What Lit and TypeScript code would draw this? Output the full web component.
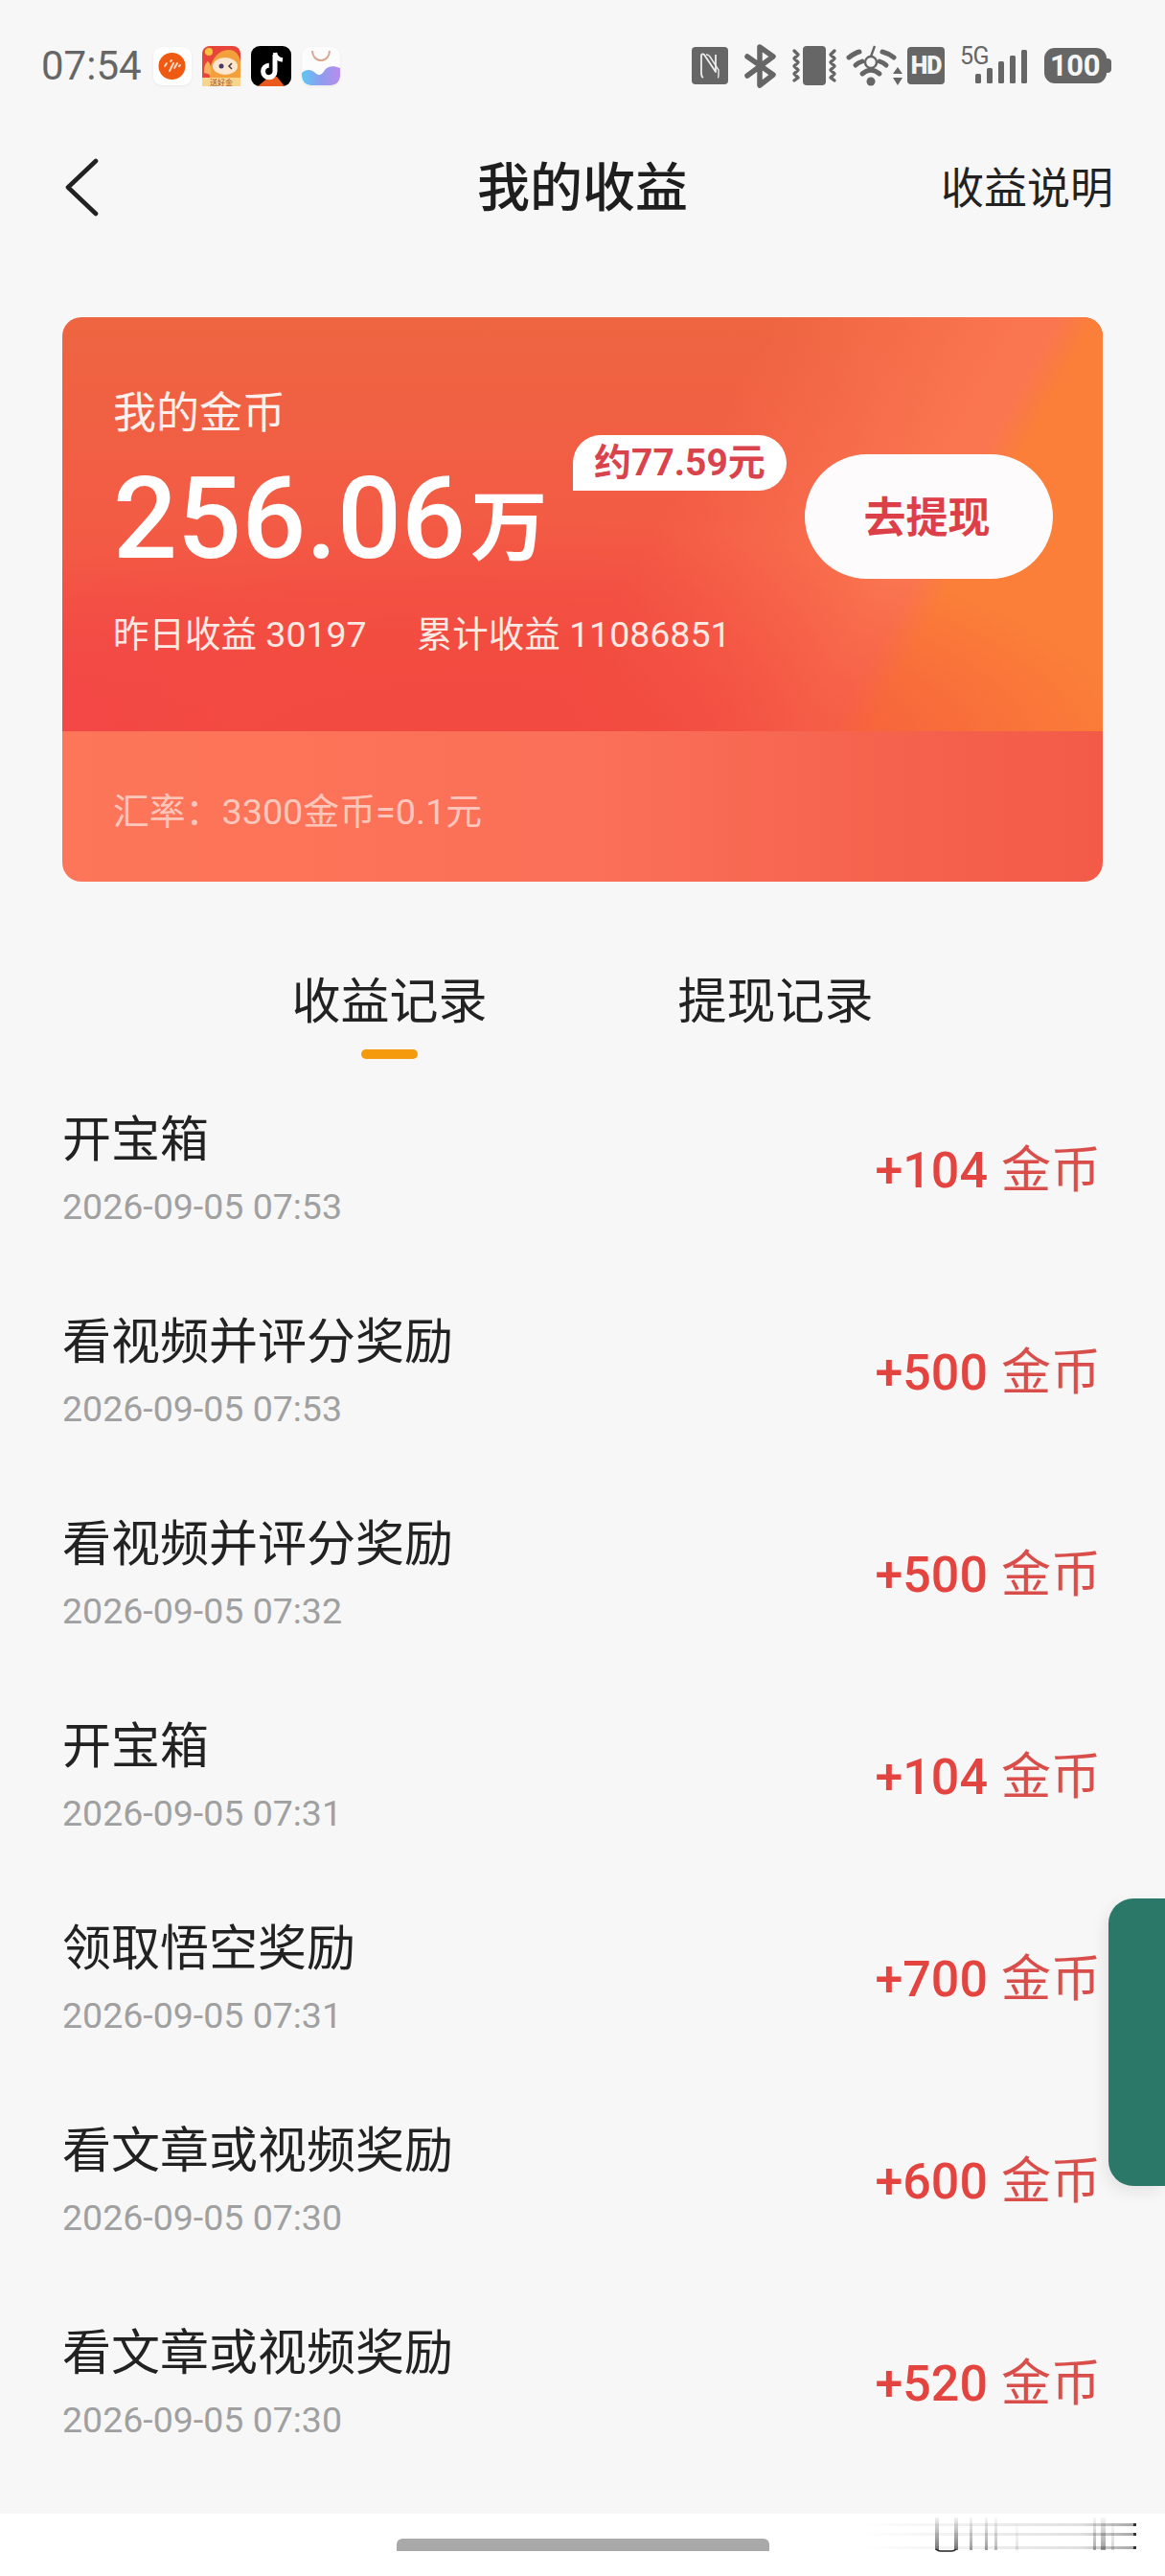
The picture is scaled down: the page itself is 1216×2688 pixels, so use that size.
import { LitElement, html, css, svg } from 'lit';
import { customElement } from 'lit/decorators.js';

const records = [
  { title: '开宝箱', time: '2026-09-05 07:53', coins: 104 },
  { title: '看视频并评分奖励', time: '2026-09-05 07:53', coins: 500 },
  { title: '看视频并评分奖励', time: '2026-09-05 07:32', coins: 500 },
  { title: '开宝箱', time: '2026-09-05 07:31', coins: 104 },
  { title: '领取悟空奖励', time: '2026-09-05 07:31', coins: 700 },
  { title: '看文章或视频奖励', time: '2026-09-05 07:30', coins: 600 },
  { title: '看文章或视频奖励', time: '2026-09-05 07:30', coins: 520 },
];

const appIcons = html`
  <svg class="app" width="40" height="40" viewBox="0 0 40 40">
    <rect width="40" height="40" rx="9" fill="#fff" />
    <circle cx="19.5" cy="20" r="14" fill="#ee5a12" />
    <path d="M12 20l2-3M17 25l4-8M22 22l3-5M18 15l1-1M27 20l1-1" stroke="#ffd9c4" stroke-width="2" stroke-linecap="round" />
  </svg>
  <svg width="40" height="42" viewBox="0 0 40 42">
    <rect width="40" height="42" rx="8" fill="#e8453a" />
    <path d="M8 34c-2-14 6-30 20-30 8 0 12 8 12 14v16z" fill="#f3a03c" />
    <path d="M2 28c0-6 1-10 4-12 3 3 4 8 3 14z" fill="#f6b25a" />
    <circle cx="7" cy="6" r="4" fill="#f5c242" />
    <ellipse cx="24" cy="21" rx="13" ry="9" fill="#fbe6cf" />
    <circle cx="20" cy="21" r="2.5" fill="#4a3a6a" />
    <path d="M31 18l-3 3 3 3" stroke="#4a3a3a" stroke-width="1.5" fill="none" />
    <rect y="33" width="40" height="9" fill="#f8d58c" />
    <text x="20" y="41" text-anchor="middle" font-size="8" fill="#a5532a" font-family="Noto Sans CJK SC">送好金</text>
  </svg>
  <svg width="42" height="42" viewBox="0 0 42 42">
    <defs><clipPath id="tt"><rect width="42" height="42" rx="9" /></clipPath></defs>
    <g clip-path="url(#tt)">
      <rect width="42" height="42" fill="#000" />
      <path d="M7 42l11-9 9-1 8 10z" fill="#ea5a1c" />
      <path d="M25 9v17.5a6.2 6.2 0 1 1-6.2-6.2" stroke="#fff" stroke-width="5" fill="none" />
      <path d="M25 7c.5 4 3.5 7 8 7.5" stroke="#fff" stroke-width="4.5" fill="none" />
    </g>
  </svg>
  <svg class="app" width="40" height="40" viewBox="0 0 40 40">
    <defs>
      <linearGradient id="cl" x1="0" x2="1" y1="0" y2="0">
        <stop offset="0" stop-color="#5cc8f5" />
        <stop offset=".5" stop-color="#8f9cf0" />
        <stop offset="1" stop-color="#b98cec" />
      </linearGradient>
    </defs>
    <rect width="40" height="40" rx="9" fill="#fdfcfd" />
    <path d="M11 4c0 6 4 10 9 10s9-4 9-10" stroke="#d9a68f" stroke-width="2" fill="none" />
    <path d="M0 27c4-4 10-4 14 0 4 4 7 2 10-3 3-4 9-5 16-2v9a9 9 0 0 1-9 9H9a9 9 0 0 1-9-9z" fill="url(#cl)" />
  </svg>
`;

// x/y below are screen pixels minus the svg origin (722, 46)
const systemIcons = svg`
  <rect x="0" y="3" width="38" height="39" rx="4" fill="#666" />
  <path d="M12 35c-2-1-2-3-2-5V12c0-2 2-2 3-1l12 18V11" stroke="#eee" stroke-width="1.8" fill="none" stroke-linejoin="round" />
  <path d="M15 11c3 0 3 1 4 2l9 14v5c0 2 0 3-1 3" stroke="#eee" stroke-width="1.4" fill="none" />
  <path d="M58 13l27 19-14 11V3l14 10-27 20" stroke="#666" stroke-width="5.5" stroke-linejoin="round" stroke-linecap="round" fill="none" />
  <rect x="116" y="2" width="24" height="41" rx="4" fill="#666" />
  <path d="M107 7l4 4-4 4 4 4-4 4 4 4-4 4 4 4-4 3M149 7l-4 4 4 4-4 4 4 4-4 4 4 4-4 4 4 3" stroke="#666" stroke-width="3.4" stroke-linecap="round" stroke-linejoin="round" fill="none" />
  <g stroke="#666" stroke-width="5" stroke-linecap="round" fill="none">
    <path d="M164 14c4-3 7-5 11-6M199 8c4 1 8 3 12 6" />
    <path d="M171 22c2-2 4-3 7-4M196 18c3 1 5 2 7 4" />
    <path d="M178 31c6-5 12-5 18 0" />
  </g>
  <circle cx="187" cy="39" r="4.5" fill="#666" />
  <circle cx="187" cy="19" r="6" stroke="#666" stroke-width="2.4" fill="none" />
  <path d="M187 13l4-11" stroke="#666" stroke-width="2.4" />
  <path d="M210 31l5-7 5 7zM210 35h10l-5 8z" fill="#666" />
  <rect x="225" y="3" width="39" height="39" rx="4" fill="#666" />
  <text x="244.5" y="31" text-anchor="middle" font-size="25" font-weight="900" fill="#f4f4f4" font-family="Roboto" letter-spacing="-1">HD</text>
  <text x="280" y="21" font-size="25" fill="#666" font-family="Roboto" letter-spacing="-.5">5G</text>
  <g fill="#666">
    <rect x="296" y="31" width="6" height="10" rx="1.5" />
    <rect x="308" y="25" width="6" height="16" rx="1.5" />
    <rect x="320" y="18" width="6" height="23" rx="1.5" />
    <rect x="332" y="12" width="6" height="29" rx="1.5" />
    <rect x="344" y="6" width="6" height="35" rx="1.5" />
  </g>
  <rect x="368" y="4" width="65" height="37" rx="11" fill="#666" />
  <path d="M433 15h1a4 4 0 0 1 4 4v7a4 4 0 0 1-4 4h-1z" fill="#666" />
  <text x="400" y="33" text-anchor="middle" font-size="31" font-weight="700" fill="#f6f6f6" font-family="Roboto" letter-spacing="-.5">100</text>
`;

@customElement('app-root')
export default class AppRoot extends LitElement {
  static styles = css`
    :host {
      display: block;
      font-family: Roboto, 'Noto Sans CJK SC', sans-serif;
    }

    .page {
      position: relative;
      display: flex;
      flex-direction: column;
      width: 1216px;
      height: 2688px;
      background: #f7f7f7;
      color: #222;
    }

    .status {
      display: flex;
      align-items: center;
      height: 46px;
      margin-top: 46px;
      padding: 0 56px 0 43px;
    }

    .clock {
      width: 106px;
      margin-right: 11px;
      font-size: 42px;
      line-height: 46px;
      color: #666;
      white-space: nowrap;
    }

    .apps {
      display: flex;
      align-items: center;
      gap: 11px;
    }

    .app {
      border-radius: 9px;
      box-shadow: 0 1px 3px rgba(0, 0, 0, 0.06);
    }

    .sys {
      margin-left: auto;
      overflow: visible;
    }

    .nav {
      display: grid;
      grid-template-columns: 1fr auto 1fr;
      align-items: center;
      height: 90px;
      margin-top: 58px;
      padding: 0 54px 0 54px;
    }

    .back {
      display: block;
      margin-left: 13px;
    }

    .title {
      margin-top: 2px;
      font-size: 55px;
      font-weight: 500;
      line-height: 70px;
      color: #1e1e1e;
    }

    .help {
      justify-self: end;
      margin-top: 6px;
      font-size: 45px;
      line-height: 60px;
      color: #222;
    }

    .card {
      width: 1086px;
      margin: 91px 0 0 65px;
      border-radius: 20px;
      overflow: hidden;
    }

    .card-main {
      display: flex;
      justify-content: space-between;
      box-sizing: border-box;
      height: 432px;
      padding: 71px 52px 0 53px;
      color: #fff;
      background:
        radial-gradient(ellipse 66% 60% at 38% 108%, #f24a40 0%, #f24a40 22%, rgba(242, 74, 64, 0) 100%),
        linear-gradient(119deg, rgba(251, 126, 54, 0) 78.5%, #fb7f38 81.5%),
        linear-gradient(119deg, rgba(250, 118, 80, 0) 56%, #fa7650 76%),
        radial-gradient(ellipse 30% 40% at 0% 100%, rgba(244, 68, 84, 0.7), rgba(244, 68, 84, 0)),
        linear-gradient(180deg, #ee6541 0%, #f35a45 55%, #f2463f 100%);
    }

    .label {
      font-size: 45px;
      line-height: 60px;
      color: #fdf0ec;
    }

    .amount-row {
      display: flex;
      align-items: flex-start;
      height: 130px;
      margin-top: 15px;
    }

    .amount {
      width: 480px;
      font-size: 118px;
      font-weight: 500;
      line-height: 130px;
      white-space: nowrap;
    }

    .amount-unit {
      margin-left: 5px;
      font-size: 80px;
      font-weight: 700;
      line-height: 0;
      vertical-align: 4px;
    }

    .cash {
      margin: -23px 0 0 0;
      padding: 0 22px;
      border-radius: 29px 29px 29px 0;
      background: #fff;
      color: #d9434c;
      font-size: 39px;
      font-weight: 700;
      line-height: 58px;
      white-space: nowrap;
    }

    .totals {
      display: flex;
      gap: 52px;
      margin-top: 30px;
      font-size: 37.5px;
      line-height: 50px;
      color: #fde9e3;
      white-space: nowrap;
    }

    .withdraw {
      flex: none;
      box-sizing: border-box;
      width: 259px;
      height: 130px;
      margin-top: 72px;
      padding: 4px 4px 0 0;
      border-radius: 65px;
      background: #fdfbfb;
      color: #dc3f48;
      font-size: 44px;
      font-weight: 700;
      line-height: 126px;
      text-align: center;
    }

    .card-foot {
      display: flex;
      align-items: center;
      height: 157px;
      padding: 4px 0 0 53px;
      box-sizing: border-box;
      background: linear-gradient(90deg, #fd7659 0%, #fb7058 50%, #f4604b 85%, #f35b48 100%);
      color: rgba(255, 255, 255, 0.62);
      font-size: 37.8px;
    }

    .tabs {
      display: flex;
      justify-content: center;
      gap: 199px;
      margin-top: 96px;
    }

    .tab {
      display: flex;
      flex-direction: column;
      align-items: center;
      gap: 19px;
      font-size: 51px;
      line-height: 60px;
    }

    .tab-mark {
      width: 59px;
      height: 10px;
      border-radius: 5px;
    }

    .tab-mark--on {
      background: #f59a0c;
    }

    .list {
      flex: 1;
      margin-top: 11px;
    }

    .row {
      display: flex;
      justify-content: space-between;
      align-items: center;
      box-sizing: border-box;
      height: 211px;
      padding: 0 67px 0 65px;
    }

    .row-title {
      font-size: 51px;
      line-height: 60px;
      color: #222;
    }

    .row-time {
      margin-top: 14px;
      font-size: 37.5px;
      line-height: 50px;
      color: #a0a0a0;
    }

    .coins {
      display: flex;
      gap: 14px;
      font-size: 52px;
      line-height: 60px;
      color: #e4443f;
    }

    .coins-value {
      font-weight: 500;
    }

    .coins-unit {
      color: #d94e4a;
    }

    .float-tab {
      position: absolute;
      top: 1981px;
      right: 0;
      width: 59px;
      height: 300px;
      border-radius: 26px 0 0 26px;
      background: #2b7869;
      box-shadow: -4px 6px 16px rgba(0, 0, 0, 0.08);
    }

    .home {
      position: relative;
      flex: none;
      height: 65px;
      padding-top: 26px;
      box-sizing: border-box;
      background: #fff;
    }

    .home-bar {
      width: 389px;
      height: 13px;
      margin: 0 auto;
      border-radius: 6px 6px 0 0;
      background: #a9a9a9;
    }

    .mark {
      position: absolute;
      top: 0;
      left: 890px;
    }
  `;

  render() {
    return html`
      <div class="page">
        <div class="status">
          <span class="clock">07:54</span>
          <div class="apps">${appIcons}</div>
          <svg class="sys" width="438" height="46" viewBox="0 0 438 46">${systemIcons}</svg>
        </div>

        <div class="nav">
          <svg class="back" width="36" height="61" viewBox="0 0 36 61">
            <path d="M33 3L4 30.5 33 58" stroke="#222" stroke-width="4.6" stroke-linecap="round" stroke-linejoin="round" fill="none" />
          </svg>
          <div class="title">我的收益</div>
          <div class="help">收益说明</div>
        </div>

        <div class="card">
          <div class="card-main">
            <div>
              <div class="label">我的金币</div>
              <div class="amount-row">
                <div class="amount">256.06<span class="amount-unit">万</span></div>
                <div class="cash">约77.59元</div>
              </div>
              <div class="totals">
                <span>昨日收益 30197</span>
                <span>累计收益 11086851</span>
              </div>
            </div>
            <div class="withdraw">去提现</div>
          </div>
          <div class="card-foot">汇率：3300金币=0.1元</div>
        </div>

        <div class="tabs">
          <div class="tab">收益记录<span class="tab-mark tab-mark--on"></span></div>
          <div class="tab">提现记录<span class="tab-mark"></span></div>
        </div>

        <div class="list">
          ${records.map(
            (r) => html`
              <div class="row">
                <div>
                  <div class="row-title">${r.title}</div>
                  <div class="row-time">${r.time}</div>
                </div>
                <div class="coins">
                  <span class="coins-value">+${r.coins}</span>
                  <span class="coins-unit">金币</span>
                </div>
              </div>
            `,
          )}
        </div>

        <div class="float-tab"></div>

        <div class="home">
          <div class="home-bar"></div>
          <svg class="mark" width="310" height="50" viewBox="0 0 310 50">
            <defs>
              <linearGradient id="hl" x1="0" x2="1" y1="0" y2="0">
                <stop offset="0" stop-color="#000" stop-opacity="0" />
                <stop offset=".8" stop-color="#000" stop-opacity=".12" />
                <stop offset="1" stop-color="#000" stop-opacity=".35" />
              </linearGradient>
              <linearGradient id="vl" x1="0" x2="0" y1="0" y2="1">
                <stop offset="0" stop-color="#000" stop-opacity=".05" />
                <stop offset="1" stop-color="#000" stop-opacity=".55" />
              </linearGradient>
            </defs>
            <g>
              <rect x="7" y="10" width="288" height="3" fill="url(#hl)" />
              <rect x="7" y="20" width="288" height="3" fill="url(#hl)" />
              <rect x="7" y="34" width="288" height="3" fill="url(#hl)" />
              <rect x="293" y="10" width="3" height="3" fill="#333" />
              <rect x="293" y="20" width="3" height="3" fill="#333" />
              <rect x="293" y="34" width="3" height="3" fill="#333" />
            </g>
            <g fill="url(#vl)">
              <rect x="86" y="4" width="4" height="34" />
              <rect x="106" y="4" width="4" height="34" />
              <rect x="122" y="4" width="3" height="34" opacity=".7" />
              <rect x="138" y="4" width="3" height="34" opacity=".7" />
              <rect x="148" y="4" width="3" height="34" opacity=".5" />
              <rect x="170" y="10" width="3" height="28" opacity=".2" />
              <rect x="251" y="4" width="3" height="34" opacity=".6" />
              <rect x="259" y="4" width="5" height="34" opacity=".7" />
              <rect x="270" y="8" width="3" height="30" opacity=".3" />
            </g>
            <path d="M87 37c2 2 3 2 5 2h11c2 0 3 0 5-2" stroke="#222" stroke-width="1.4" fill="none" />
          </svg>
        </div>
      </div>
    `;
  }
}
